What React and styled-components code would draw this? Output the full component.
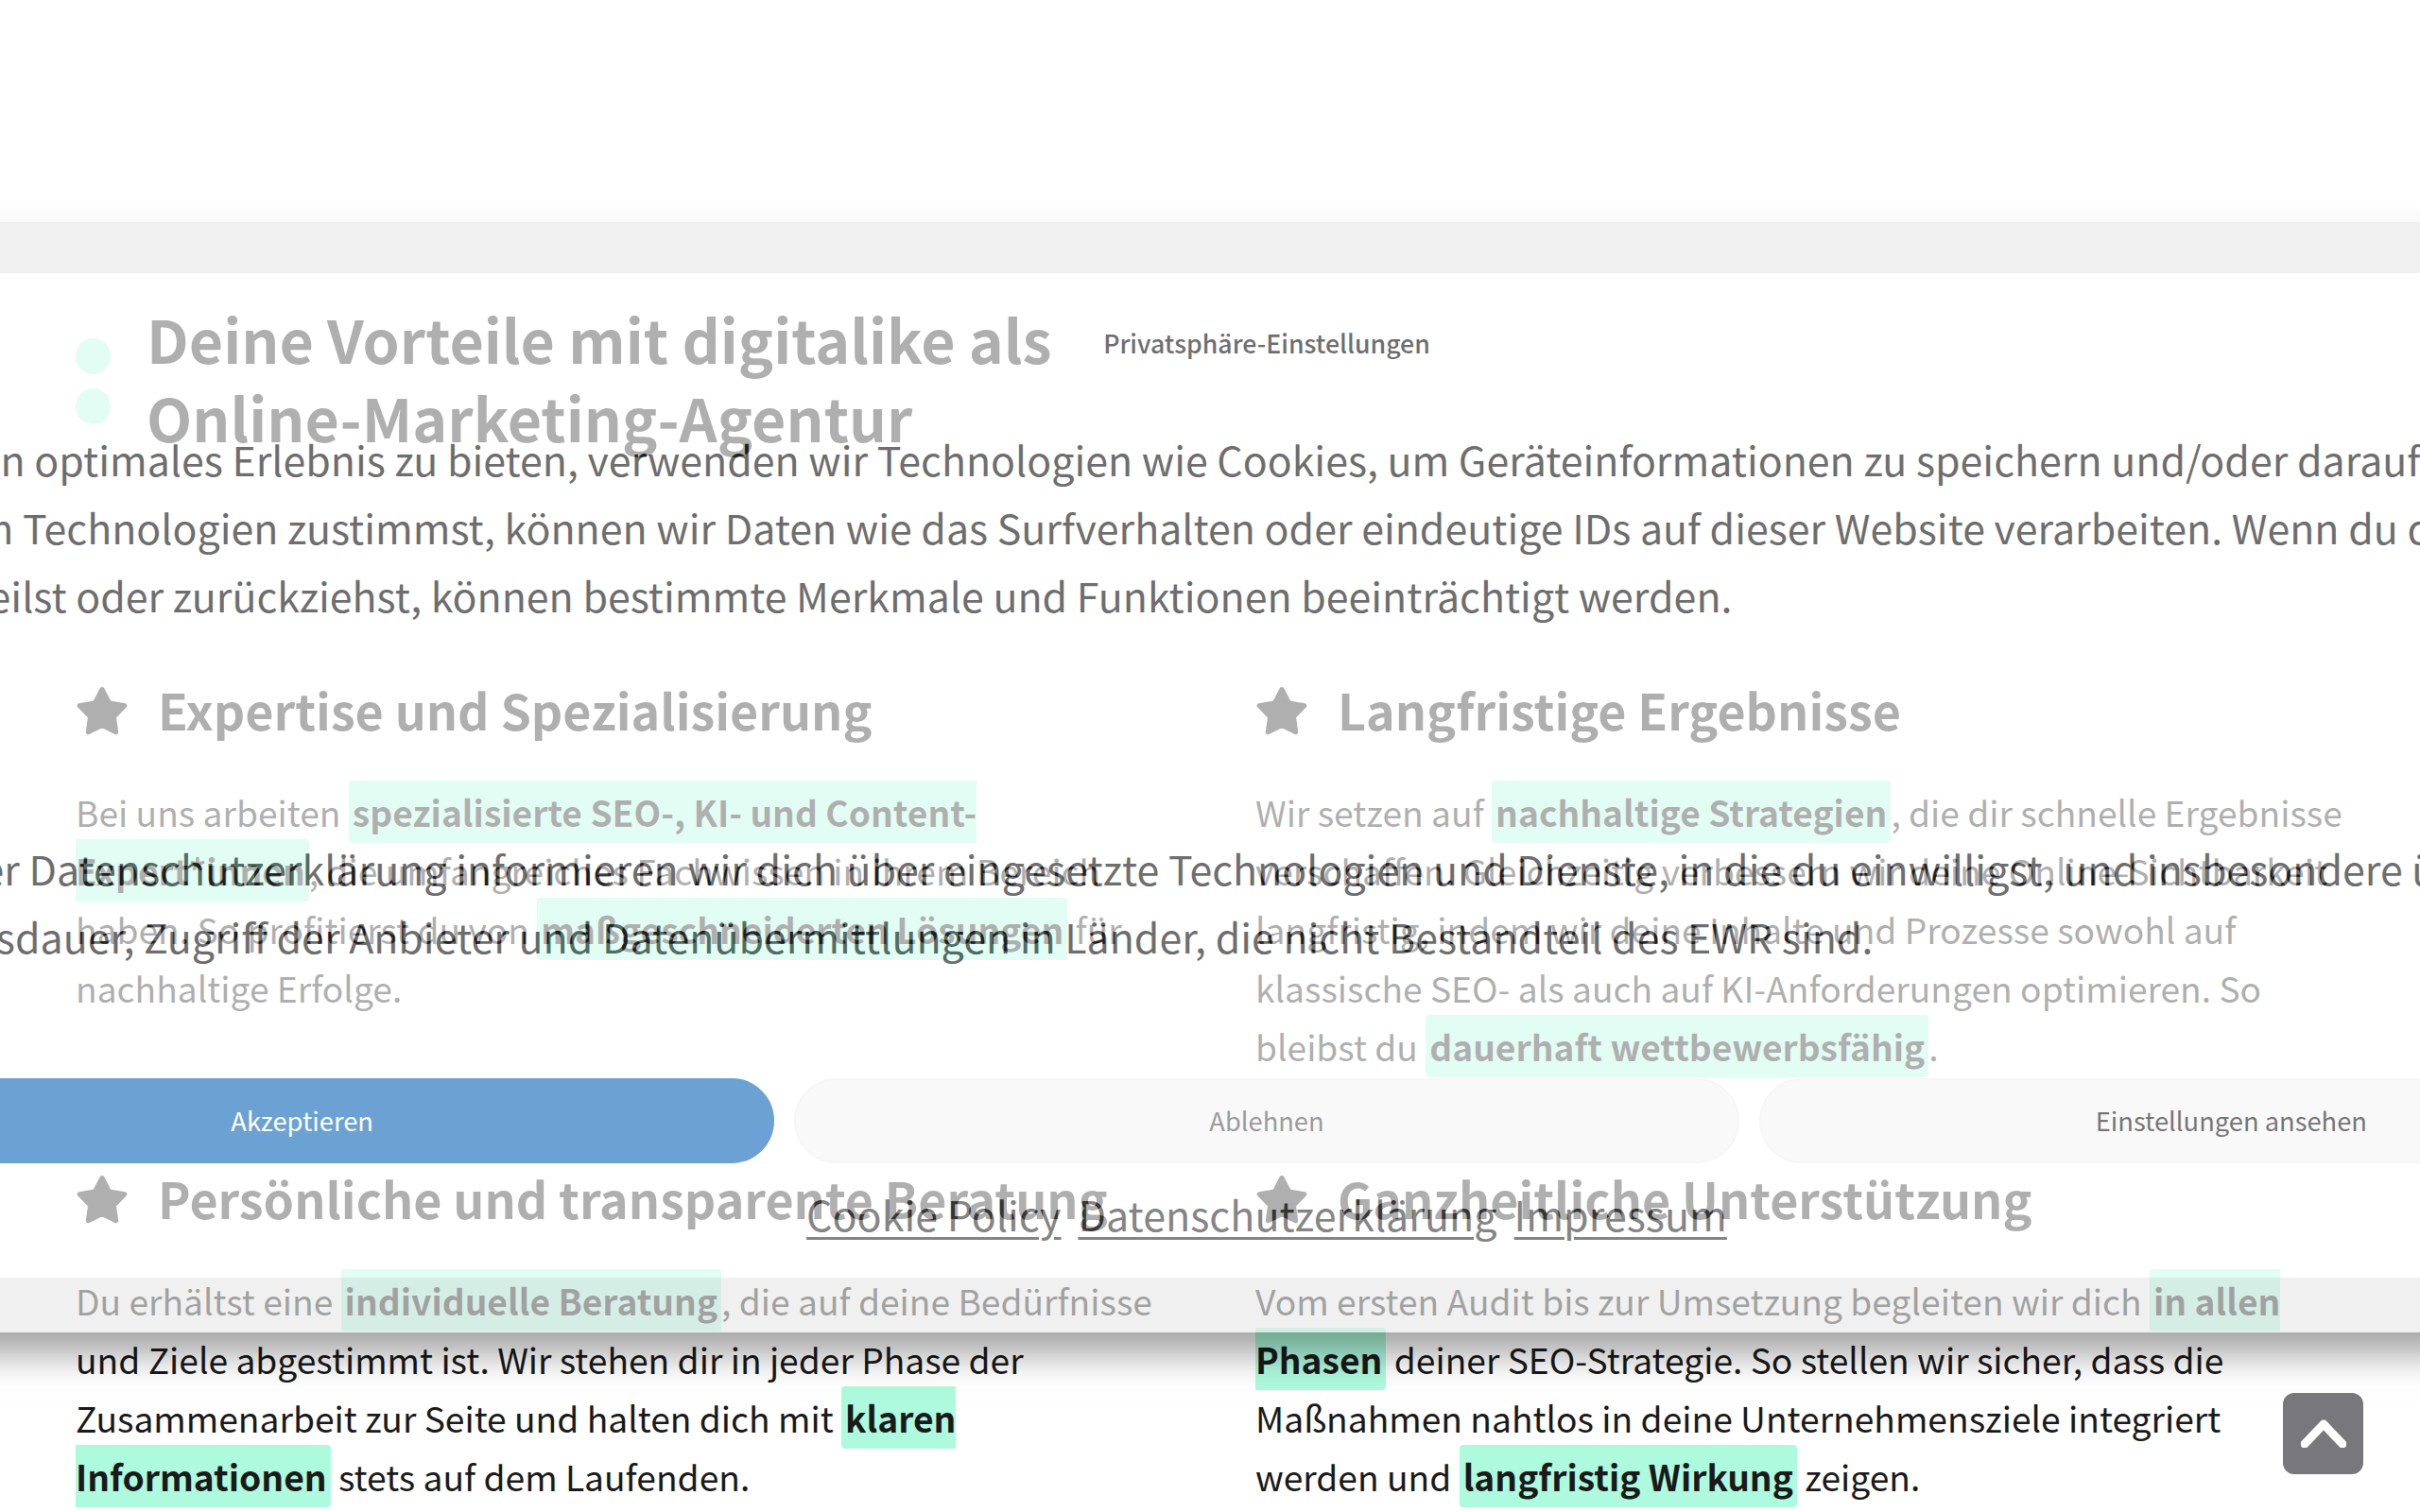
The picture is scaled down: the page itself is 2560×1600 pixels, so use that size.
import React from "react";
import styled, { createGlobalStyle } from "styled-components";

const GlobalStyle = createGlobalStyle`
  html, body {
    margin: 0;
    padding: 0;
    background: #fff;
  }
  body {
    width: 2560px;
    height: 1600px;
    overflow: hidden;
    position: relative;
    font-family: "Noto Sans CJK JP", "Noto Sans", sans-serif;
    color: #1a1a1a;
  }
`;

const Page = styled.main`
  padding: 316px 0 0 80px;
`;

const TitleRow = styled.header`
  display: flex;
  gap: 38px;
`;

const Dots = styled.div`
  display: flex;
  flex-direction: column;
  gap: 15px;
  padding-top: 42px;
`;

const Dot = styled.span`
  width: 37px;
  height: 38px;
  border-radius: 50%;
  background: #aefadf;
`;

const Title = styled.h1`
  margin: 0;
  font-size: 62.7px;
  line-height: 83px;
  font-weight: 700;
`;

const Cards = styled.section`
  display: grid;
  grid-template-columns: 1152px 1152px;
  column-gap: 96px;
  row-gap: 96px;
  margin-top: 235px;
`;

const CardHead = styled.h3`
  display: flex;
  align-items: center;
  gap: 32px;
  margin: 0 0 43px;
  font-size: 52px;
  line-height: 68px;
  font-weight: 700;
`;

const Star = styled.svg`
  flex: none;
  width: 54px;
  height: 53px;
  margin: 2px 0 0 1px;
  fill: currentColor;
  stroke: currentColor;
  stroke-width: 5;
  stroke-linejoin: round;
`;

const CardText = styled.p`
  margin: 0;
  font-size: 37.2px;
  line-height: 62px;
`;

const Mark = styled.mark`
  background: #aefadf;
  color: inherit;
  font-weight: 700;
  padding: 6px 4px;
  border-radius: 4px;
`;

const ToTop = styled.button`
  position: absolute;
  left: 2415px;
  top: 1474px;
  width: 85px;
  height: 86px;
  border: 0;
  border-radius: 12px;
  background: #77777c;
  display: flex;
  align-items: center;
  justify-content: center;
  padding: 0;
`;

const Banner = styled.aside`
  position: absolute;
  top: 235px;
  left: -180px;
  width: 3040px;
  height: 1175px;
  display: flex;
  flex-direction: column;
  background: #fff;
  opacity: 0.65;
  color: #222;
  box-shadow: 0 30px 34px -6px rgba(0, 0, 0, 0.52), 0 0 26px rgba(0, 0, 0, 0.06);
`;

const Band = styled.div`
  flex: none;
  height: ${({ $h }) => $h}px;
  background: #e9e9e9;
`;

const BannerBody = styled.div`
  flex: 1;
  min-height: 0;
  display: flex;
  flex-direction: column;
  padding-top: 54px;
`;

const BannerTitle = styled.div`
  text-align: center;
  font-size: 26.7px;
  line-height: 40px;
  font-weight: 500;
  color: #222;
`;

const Intro = styled.div`
  font-size: 42.9px;
  line-height: 72px;
  white-space: nowrap;
  margin-top: ${({ $top }) => $top}px;
`;

const Line = styled.div``;

const Buttons = styled.div`
  display: flex;
  gap: 21px;
  margin-top: 115px;
`;

const ChoiceButton = styled.button`
  flex: 1;
  height: 90px;
  border-radius: 45px;
  padding: 0 0 3px;
  font-family: inherit;
  font-size: 27.3px;
  border: 2px solid ${({ $kind }) => ($kind === "accept" ? "#1d70bc" : "#f2f2f2")};
  background: ${({ $kind }) => ($kind === "accept" ? "#1d70bc" : "#f7f7f7")};
  color: ${({ $kind }) =>
    $kind === "accept" ? "#fff" : $kind === "deny" ? "#666" : "#2e2e2e"};
`;

const LinkRow = styled.nav`
  display: flex;
  justify-content: center;
  gap: 18px;
  margin-top: 17px;
  font-size: 43px;
  line-height: 72px;
`;

const PolicyLink = styled.a`
  color: #444;
  text-decoration: underline;
  text-decoration-thickness: 3px;
  text-underline-offset: 6px;
`;

const StarIcon = () => (
  <Star viewBox="0 0 54 53" aria-hidden="true">
    <path d="M27 3.5 L34.6 18 L50.8 20.8 L39.4 32.5 L41.7 48.7 L27 41.5 L12.3 48.7 L14.6 32.5 L3.2 20.8 L19.4 18 Z" />
  </Star>
);

const cards = [
  {
    title: "Expertise und Spezialisierung",
    body: (
      <>
        Bei uns arbeiten <Mark>spezialisierte SEO-, KI- und Content-Expert*innen</Mark>, die
        umfangreiches Fachwissen in ihrem Bereich haben. So profitierst du von{" "}
        <Mark>maßgeschneiderten Lösungen</Mark> für nachhaltige Erfolge.
      </>
    ),
  },
  {
    title: "Langfristige Ergebnisse",
    body: (
      <>
        Wir setzen auf <Mark>nachhaltige Strategien</Mark>, die dir schnelle Ergebnisse
        verschaffen. Gleichzeitig verbessern wir deine Online-Sichtbarkeit langfristig, indem
        wir deine Inhalte und Prozesse sowohl auf klassische SEO- als auch auf KI-Anforderungen
        optimieren. So bleibst du <Mark>dauerhaft wettbewerbsfähig</Mark>.
      </>
    ),
  },
  {
    title: "Persönliche und transparente Beratung",
    body: (
      <>
        Du erhältst eine <Mark>individuelle Beratung</Mark>, die auf deine Bedürfnisse und Ziele
        abgestimmt ist. Wir stehen dir in jeder Phase der Zusammenarbeit zur Seite und halten
        dich mit <Mark>klaren Informationen</Mark> stets auf dem Laufenden.
      </>
    ),
  },
  {
    title: "Ganzheitliche Unterstützung",
    body: (
      <>
        Vom ersten Audit bis zur Umsetzung begleiten wir dich <Mark>in allen Phasen</Mark> deiner
        SEO-Strategie. So stellen wir sicher, dass die Maßnahmen nahtlos in deine
        Unternehmensziele integriert werden und <Mark>langfristig Wirkung</Mark> zeigen.
      </>
    ),
  },
];

export default function App() {
  return (
    <>
      <GlobalStyle />
      <Page>
        <TitleRow>
          <Dots>
            <Dot />
            <Dot />
          </Dots>
          <Title>
            Deine Vorteile mit digitalike als
            <br />
            Online-Marketing-Agentur
          </Title>
        </TitleRow>
        <Cards>
          {cards.map((card) => (
            <article key={card.title}>
              <CardHead>
                <StarIcon />
                {card.title}
              </CardHead>
              <CardText>{card.body}</CardText>
            </article>
          ))}
        </Cards>
      </Page>

      <Banner>
        <Band $h={54} />
        <BannerBody>
          <BannerTitle>Privatsphäre-Einstellungen</BannerTitle>
          <Intro $top={66}>
            <Line>
              Um dir ein optimales Erlebnis zu bieten, verwenden wir Technologien wie Cookies, um
              Geräteinformationen zu speichern und/oder darauf zuzugreifen. Wenn
            </Line>
            <Line>
              du diesen Technologien zustimmst, können wir Daten wie das Surfverhalten oder
              eindeutige IDs auf dieser Website verarbeiten. Wenn du deine Einwilligung
            </Line>
            <Line>
              nicht erteilst oder zurückziehst, können bestimmte Merkmale und Funktionen
              beeinträchtigt werden.
            </Line>
          </Intro>
          <Intro $top={217}>
            <Line>
              In unserer Datenschutzerklärung informieren wir dich über eingesetzte Technologien
              und Dienste, in die du einwilligst, und insbesondere über
            </Line>
            <Line>
              Speichersdauer, Zugriff der Anbieter und Datenübermittlungen in Länder, die nicht
              Bestandteil des EWR sind.
            </Line>
          </Intro>
          <Buttons>
            <ChoiceButton $kind="accept">Akzeptieren</ChoiceButton>
            <ChoiceButton $kind="deny">Ablehnen</ChoiceButton>
            <ChoiceButton $kind="view">Einstellungen ansehen</ChoiceButton>
          </Buttons>
          <LinkRow>
            <PolicyLink href="#cookie">Cookie Policy</PolicyLink>
            <PolicyLink href="#datenschutz">Datenschutzerklärung</PolicyLink>
            <PolicyLink href="#impressum">Impressum</PolicyLink>
          </LinkRow>
        </BannerBody>
        <Band $h={58} />
      </Banner>

      <ToTop aria-label="Nach oben">
        <svg width="48" height="30" viewBox="0 0 48 30" fill="none">
          <path
            d="M4 26 L24 5 L44 26"
            stroke="#fff"
            strokeWidth="9"
            strokeLinecap="round"
            strokeLinejoin="round"
          />
        </svg>
      </ToTop>
    </>
  );
}
